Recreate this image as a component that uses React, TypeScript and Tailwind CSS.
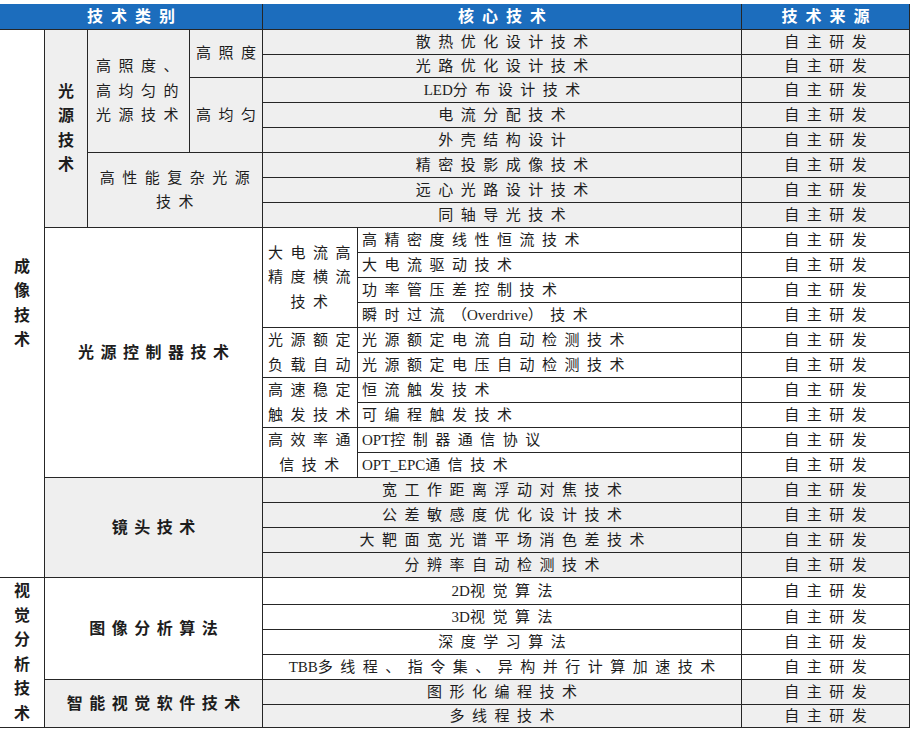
import React from "react";

const GRAY = "bg-[#efefef]";
const WHITE = "bg-white";

// core tech cell, spans the sub-label column too
const Core = ({ bg, children }: { bg: string; children: React.ReactNode }) => (
  <div className={`col-span-2 flex items-center justify-center whitespace-nowrap text-[15px] tracking-[7.5px] ${bg}`}>
    <span className="mr-[-7.5px]">{children}</span>
  </div>
);

// left aligned core tech (光源控制器 section)
const CoreLeft = ({ children }: { children: React.ReactNode }) => (
  <div className="flex items-center whitespace-nowrap bg-white pl-[4px] text-[15px] tracking-[7.5px]">
    {children}
  </div>
);

const Src = ({ bg }: { bg: string }) => (
  <div className={`flex items-center justify-center text-[15px] tracking-[7.5px] ${bg}`}>
    <span className="mr-[-7.5px]">自主研发</span>
  </div>
);

const Latin = ({ children }: { children: React.ReactNode }) => (
  <span className="tracking-normal">{children}</span>
);

const Vertical = ({ text, className }: { text: string; className: string }) => (
  <div className={`flex flex-col items-center justify-center text-[16px] font-bold ${className}`}>
    {[...text].map((c, i) => (
      <span key={i} className="h-[24.5px] leading-[24.5px]">
        {c}
      </span>
    ))}
  </div>
);

const Lines = ({ lines, className }: { lines: string[]; className: string }) => (
  <div className={`flex flex-col justify-center whitespace-nowrap text-[15px] tracking-[7.5px] ${className}`}>
    {lines.map((l, i) => (
      <div key={i} className="h-[24.5px] leading-[24.5px]">
        {l}
      </div>
    ))}
  </div>
);

const Section = ({ text, className }: { text: string; className: string }) => (
  <div className={`col-span-3 flex items-center justify-center text-[16px] font-bold tracking-[6.5px] ${className}`}>
    <span className="mr-[-6.5px]">{text}</span>
  </div>
);

const Head = ({ text, className }: { text: string; className: string }) => (
  <div className={`flex items-center justify-center bg-[#1c6dbd] text-[16px] font-bold tracking-[8px] text-white ${className}`}>
    <span className="mr-[-8px]">{text}</span>
  </div>
);

export default function App() {
  return (
    <div className="min-h-screen bg-white pt-[4px] font-['Liberation_Serif','Noto_Sans_CJK_SC',serif] text-[#1d1d1d]">
      <div className="grid w-[910px] grid-cols-[44px_42px_101px_72px_94px_383px_167px] grid-rows-[25px_24px_22px_repeat(20,24px)_26px_repeat(4,24px)_22px] gap-px bg-[#262626] pb-px pr-px">
        {/* header */}
        <Head text="技术类别" className="col-span-4" />
        <Head text="核心技术" className="col-span-2" />
        <Head text="技术来源" className="" />

        {/* row 1 */}
        <Vertical text="成像技术" className={`row-span-22 ${WHITE}`} />
        <Vertical text="光源技术" className={`row-span-8 ${GRAY}`} />
        <Lines lines={["高照度、", "高均匀的", "光源技术"]} className={`row-span-5 pl-[8px] ${GRAY}`} />
        <div className={`row-span-2 flex items-center justify-center whitespace-nowrap text-[15px] tracking-[7.5px] ${GRAY}`}>
          <span className="mr-[-7.5px]">高照度</span>
        </div>
        <Core bg={GRAY}>散热优化设计技术</Core>
        <Src bg={GRAY} />

        <Core bg={GRAY}>光路优化设计技术</Core>
        <Src bg={GRAY} />

        <div className={`row-span-3 flex items-center justify-center whitespace-nowrap text-[15px] tracking-[7.5px] ${GRAY}`}>
          <span className="mr-[-7.5px]">高均匀</span>
        </div>
        <Core bg={GRAY}>
          <Latin>LED</Latin>分布设计技术
        </Core>
        <Src bg={GRAY} />

        <Core bg={GRAY}>电流分配技术</Core>
        <Src bg={GRAY} />

        <Core bg={GRAY}>外壳结构设计</Core>
        <Src bg={GRAY} />

        <Lines lines={["高性能复杂光源", "技术"]} className={`col-span-2 row-span-3 items-center pl-[7px] ${GRAY}`} />
        <Core bg={GRAY}>精密投影成像技术</Core>
        <Src bg={GRAY} />

        <Core bg={GRAY}>远心光路设计技术</Core>
        <Src bg={GRAY} />

        <Core bg={GRAY}>同轴导光技术</Core>
        <Src bg={GRAY} />

        {/* 光源控制器 */}
        <Section text="光源控制器技术" className={`row-span-10 ${WHITE}`} />
        <Lines lines={["大电流高", "精度横流", "技术"]} className={`row-span-4 items-center pl-[6px] ${WHITE}`} />
        <CoreLeft>高精密度线性恒流技术</CoreLeft>
        <Src bg={WHITE} />

        <CoreLeft>大电流驱动技术</CoreLeft>
        <Src bg={WHITE} />

        <CoreLeft>功率管压差控制技术</CoreLeft>
        <Src bg={WHITE} />

        <CoreLeft>
          瞬时过流<Latin>（Overdrive</Latin>）技术
        </CoreLeft>
        <Src bg={WHITE} />

        <Lines lines={["光源额定", "负载自动"]} className={`row-span-2 items-center pl-[6px] ${WHITE}`} />
        <CoreLeft>光源额定电流自动检测技术</CoreLeft>
        <Src bg={WHITE} />

        <CoreLeft>光源额定电压自动检测技术</CoreLeft>
        <Src bg={WHITE} />

        <Lines lines={["高速稳定", "触发技术"]} className={`row-span-2 items-center pl-[6px] ${WHITE}`} />
        <CoreLeft>恒流触发技术</CoreLeft>
        <Src bg={WHITE} />

        <CoreLeft>可编程触发技术</CoreLeft>
        <Src bg={WHITE} />

        <Lines lines={["高效率通", "信技术"]} className={`row-span-2 items-center pl-[6px] ${WHITE}`} />
        <CoreLeft>
          <Latin>OPT</Latin>控制器通信协议
        </CoreLeft>
        <Src bg={WHITE} />

        <CoreLeft>
          <Latin>OPT_EPC</Latin>通信技术
        </CoreLeft>
        <Src bg={WHITE} />

        {/* 镜头 */}
        <Section text="镜头技术" className={`row-span-4 ${GRAY}`} />
        <Core bg={GRAY}>宽工作距离浮动对焦技术</Core>
        <Src bg={GRAY} />

        <Core bg={GRAY}>公差敏感度优化设计技术</Core>
        <Src bg={GRAY} />

        <Core bg={GRAY}>大靶面宽光谱平场消色差技术</Core>
        <Src bg={GRAY} />

        <Core bg={GRAY}>分辨率自动检测技术</Core>
        <Src bg={GRAY} />

        {/* 视觉分析 */}
        <Vertical text="视觉分析技术" className={`row-span-6 ${WHITE}`} />
        <Section text="图像分析算法" className={`row-span-4 ${WHITE}`} />
        <Core bg={WHITE}>
          <Latin>2D</Latin>视觉算法
        </Core>
        <Src bg={WHITE} />

        <Core bg={WHITE}>
          <Latin>3D</Latin>视觉算法
        </Core>
        <Src bg={WHITE} />

        <Core bg={WHITE}>深度学习算法</Core>
        <Src bg={WHITE} />

        <Core bg={WHITE}>
          <Latin>TBB</Latin>多线程、指令集、异构并行计算加速技术
        </Core>
        <Src bg={WHITE} />

        <Section text="智能视觉软件技术" className={`row-span-2 ${GRAY}`} />
        <Core bg={GRAY}>图形化编程技术</Core>
        <Src bg={GRAY} />

        <Core bg={GRAY}>多线程技术</Core>
        <Src bg={GRAY} />
      </div>
    </div>
  );
}
